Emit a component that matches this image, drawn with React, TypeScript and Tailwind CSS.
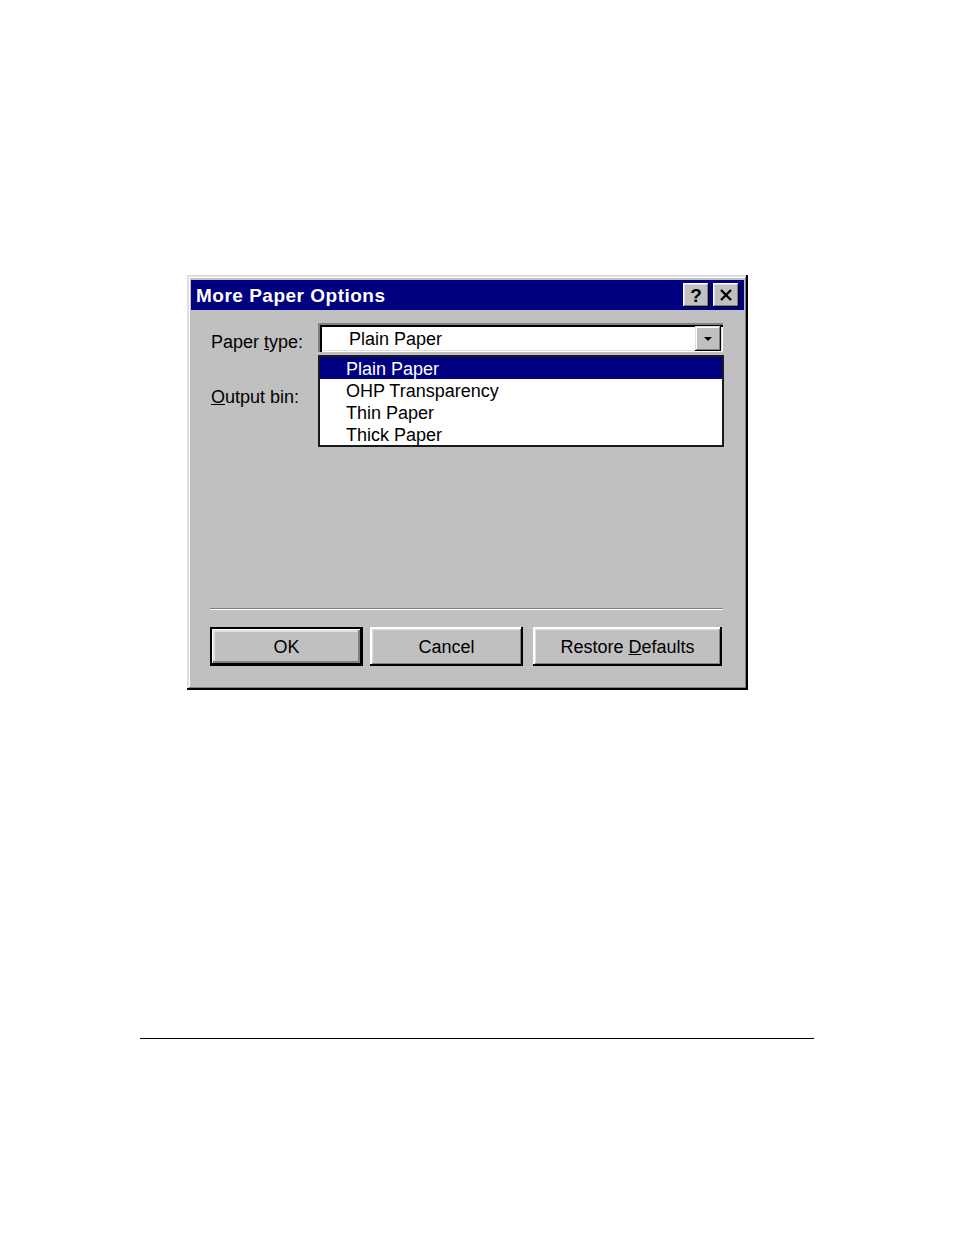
import React from "react";

const font = { fontFamily: '"Liberation Sans", Arial, sans-serif' };

function TitleBtn({ children }: { children: React.ReactNode }) {
  return (
    <div className="w-[26px] h-[24px] bg-[#c0c0c0] flex items-center justify-center shadow-[inset_-1px_-1px_0_#000,inset_1px_1px_0_#fff,inset_-2px_-2px_0_#808080,inset_2px_2px_0_#dfdfdf]">
      {children}
    </div>
  );
}

function Btn({ children, w, def }: { children: React.ReactNode; w: string; def?: boolean }) {
  return (
    <div
      className={
        "h-[39px] bg-[#c0c0c0] flex items-center justify-center text-[18px] text-black " +
        w +
        (def
          ? " shadow-[inset_-2px_-2px_0_#000,inset_2px_2px_0_#000,inset_-3px_-3px_0_#000,inset_3px_3px_0_#fff,inset_-5px_-5px_0_#808080,inset_5px_5px_0_#dfdfdf]"
          : " shadow-[inset_-2px_-2px_0_#000,inset_2px_2px_0_#fff,inset_-3px_-3px_0_#808080,inset_3px_3px_0_#dfdfdf]")
      }
    >
      <span className="pt-[2px]">{children}</span>
    </div>
  );
}

export default function App() {
  return (
    <div className="w-[954px] h-[1235px] bg-white overflow-hidden" style={font}>
      <div className="pt-[275px] pl-[187px]">
        <div className="relative w-[561px] h-[415px] bg-[#c0c0c0] pt-[5px] px-[4px] shadow-[inset_-2px_-2px_0_#000,inset_2px_2px_0_#dfdfdf,inset_-3px_-3px_0_#808080,inset_3px_3px_0_#fff]">
          {/* Title bar */}
          <div className="h-[30px] bg-[#000080] flex items-center justify-between pl-[5px] pr-[5px]">
            <span className="text-white text-[19px] font-bold leading-none tracking-[0.5px]">More Paper Options</span>
            <div className="flex gap-[4px]">
              <TitleBtn>
                <span className="text-black text-[19px] font-bold leading-none">?</span>
              </TitleBtn>
              <TitleBtn>
                <svg width="14" height="12" viewBox="0 0 14 12">
                  <path d="M2 1 L12 11 M12 1 L2 11" stroke="#000" strokeWidth="2.4" />
                </svg>
              </TitleBtn>
            </div>
          </div>

          {/* Content */}
          <div className="pl-[20px] pr-[21px] text-black text-[18px]">
            <div className="mt-[13px] h-[29px] flex items-center">
              <div className="w-[107px] pt-[9px]">
                Paper <u>t</u>ype:
              </div>
              <div className="w-[405px] h-[29px] bg-white flex items-center justify-between pl-[31px] pr-[2px] shadow-[inset_2px_2px_0_#808080,inset_4px_4px_0_#000,inset_-1px_-1px_0_#fff,inset_-2px_-2px_0_#dfdfdf]">
                <span className="pt-[4px]">Plain Paper</span>
                <div className="w-[26px] h-[25px] mt-[2px] bg-[#c0c0c0] flex items-center justify-center shadow-[inset_-1px_-1px_0_#000,inset_1px_1px_0_#dfdfdf,inset_-2px_-2px_0_#808080,inset_2px_2px_0_#fff]">
                  <svg width="10" height="6" viewBox="0 0 10 6">
                    <path d="M1 1 L9 1 L5 5 Z" fill="#000" />
                  </svg>
                </div>
              </div>
            </div>
            <div className="mt-[33px] h-[24px] flex items-center">
              <div className="w-[107px]">
                <u>O</u>utput bin:
              </div>
            </div>

            <div className="mt-[199px] -ml-[1px] w-[513px] h-[2px] border-t border-t-[#808080] border-b border-b-white" />

            <div className="mt-[17px] -ml-[1px] flex">
              <Btn w="w-[153px]" def>
                OK
              </Btn>
              <div className="w-[7px]" />
              <Btn w="w-[153px]">Cancel</Btn>
              <div className="w-[10px]" />
              <Btn w="w-[189px]">
                Restore <u>D</u>efaults
              </Btn>
            </div>
          </div>

          {/* Dropdown list overlay */}
          <div className="absolute left-[131px] top-[80px] w-[406px] h-[92px] bg-white border-2 border-[#1a1a1a] text-[18px] leading-[22px]">
            <div className="h-[22px] bg-[#000080] text-white pl-[26px] pt-[1px]">Plain Paper</div>
            <div className="h-[22px] text-black pl-[26px] pt-[1px]">OHP Transparency</div>
            <div className="h-[22px] text-black pl-[26px] pt-[1px]">Thin Paper</div>
            <div className="h-[22px] text-black pl-[26px] pt-[1px]">Thick Paper</div>
          </div>
        </div>

        <div className="mt-[348px] -ml-[47px] w-[674px] h-[1px] bg-black" />
      </div>
    </div>
  );
}
